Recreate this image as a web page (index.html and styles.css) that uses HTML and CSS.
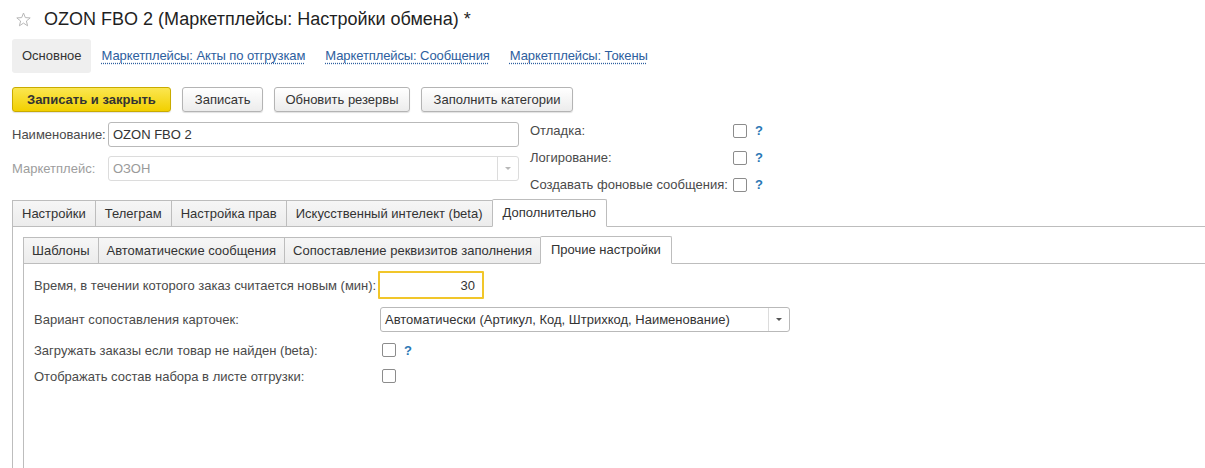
FILE: index.html
```html
<!DOCTYPE html>
<html lang="ru">
<head>
<meta charset="utf-8">
<link rel="stylesheet" href="styles.css">
</head>
<body>
<div class="header">
  <svg class="star" width="15" height="15" viewBox="0 0 15 15"><path d="M7.5 1 L9.3 5.6 L14.2 5.9 L10.4 9 L11.6 13.8 L7.5 11.1 L3.4 13.8 L4.6 9 L0.8 5.9 L5.7 5.6 Z" fill="none" stroke="#b8b8b8" stroke-width="1"/></svg>
  <h1 class="title">OZON FBO 2 (Маркетплейсы: Настройки обмена) *</h1>
</div>
<div class="nav">
  <span class="nav-item active">Основное</span>
  <a class="nav-item link">Маркетплейсы: Акты по отгрузкам</a>
  <a class="nav-item link">Маркетплейсы: Сообщения</a>
  <a class="nav-item link">Маркетплейсы: Токены</a>
</div>
<div class="toolbar">
  <button class="btn primary">Записать и закрыть</button>
  <button class="btn">Записать</button>
  <button class="btn">Обновить резервы</button>
  <button class="btn">Заполнить категории</button>
</div>
<div class="form-top">
  <div class="col-left">
    <div class="frow">
      <span class="flabel">Наименование:</span>
      <div class="input">OZON FBO 2</div>
    </div>
    <div class="frow">
      <span class="flabel disabled">Маркетплейс:</span>
      <div class="input select disabled"><span class="sel-text">ОЗОН</span><span class="sel-btn"><span class="tri light"></span></span></div>
    </div>
  </div>
  <div class="col-right">
    <div class="crow"><span class="clabel">Отладка:</span><span class="cb"></span><span class="q">?</span></div>
    <div class="crow"><span class="clabel">Логирование:</span><span class="cb"></span><span class="q">?</span></div>
    <div class="crow"><span class="clabel">Создавать фоновые сообщения:</span><span class="cb"></span><span class="q">?</span></div>
  </div>
</div>
<div class="tabs outer">
  <div class="tabbar">
    <span class="tab">Настройки</span>
    <span class="tab">Телеграм</span>
    <span class="tab">Настройка прав</span>
    <span class="tab">Искусственный интелект (beta)</span>
    <span class="tab active">Дополнительно</span>
    <span class="tab-fill"></span>
  </div>
  <div class="panel outer-panel">
    <div class="tabs inner">
      <div class="tabbar">
        <span class="tab">Шаблоны</span>
        <span class="tab">Автоматические сообщения</span>
        <span class="tab">Сопоставление реквизитов заполнения</span>
        <span class="tab active">Прочие настройки</span>
        <span class="tab-fill"></span>
      </div>
      <div class="panel inner-panel">
        <div class="grid">
          <span class="glabel">Время, в течении которого заказ считается новым (мин):</span>
          <div class="input num focused">30</div>
          <span class="glabel">Вариант сопоставления карточек:</span>
          <div class="input select wide"><span class="sel-text">Автоматически (Артикул, Код, Штрихкод, Наименование)</span><span class="sel-btn"><span class="tri"></span></span></div>
          <span class="glabel">Загружать заказы если товар не найден (beta):</span>
          <div class="cbwrap"><span class="cb"></span><span class="q">?</span></div>
          <span class="glabel">Отображать состав набора в листе отгрузки:</span>
          <div class="cbwrap"><span class="cb"></span></div>
        </div>
      </div>
    </div>
  </div>
</div>
</body>
</html>
```

FILE: styles.css
```css
* { box-sizing: border-box; }
html, body { margin: 0; padding: 0; background: #fff; overflow: hidden; }
body {
  font-family: "Liberation Sans", Arial, sans-serif;
  font-size: 13px;
  color: #4a4a4a;
  width: 1205px;
  height: 468px;
}
.header {
  display: flex;
  align-items: center;
  height: 36px;
  padding: 2px 0 0 16px;
}
.star { margin-right: 13px; }
.title {
  margin: 0;
  font-size: 18px;
  font-weight: normal;
  color: #1f1f1f;
}
.nav {
  display: flex;
  align-items: center;
  gap: 2px;
  margin: 3px 0 0 12px;
  height: 34px;
}
.nav-item {
  height: 34px;
  line-height: 34px;
  padding: 0 10px;
  border-radius: 3px;
}
.nav-item.active { background: #efefef; color: #333; padding: 0 9px 0 10px; }
.nav-item.link {
  color: #2d5e9e;
  padding: 0 9px;
  letter-spacing: -0.1px;
  text-decoration: underline dotted;
  text-underline-offset: 3px;
}
.toolbar {
  display: flex;
  gap: 11px;
  margin: 14px 0 0 12px;
}
.btn {
  font-family: inherit;
  font-size: 13px;
  height: 25px;
  padding: 0 12px;
  color: #333;
  border: 1px solid #b4b4b4;
  border-radius: 3px;
  background: linear-gradient(#ffffff, #ececec);
  box-shadow: 0 1px 1px rgba(0,0,0,0.12);
}
.btn:nth-child(3) { padding: 0 10px; }
.btn.primary {
  background: linear-gradient(#fbe650, #f2d000);
  border-color: #c9ab00;
  font-weight: bold;
  color: #333;
  padding: 0 14px;
}
.form-top {
  display: flex;
  margin: 10px 0 0 12px;
}
.col-left {
  display: flex;
  flex-direction: column;
  gap: 9px;
  width: 507px;
}
.frow {
  display: flex;
  align-items: center;
}
.flabel { width: 96px; color: #4a4a4a; }
.flabel.disabled { color: #9d9d9d; }
.input {
  height: 25px;
  border: 1px solid #b9b9b9;
  border-radius: 3px;
  padding: 0 4px;
  display: flex;
  align-items: center;
  color: #333;
  background: #fff;
}
.frow .input { width: 411px; }
.input.disabled { border-color: #dcdcdc; color: #9a9a9a; }
.select { padding: 0; }
.sel-text { flex: 1; padding-left: 4px; }
.sel-btn {
  width: 21px;
  height: 100%;
  border-left: 1px solid #dcdcdc;
  display: flex;
  align-items: center;
  justify-content: center;
}
.tri {
  width: 0; height: 0;
  border-left: 3px solid transparent;
  border-right: 3px solid transparent;
  border-top: 3px solid #555;
}
.tri.light { border-top-color: #b8b8b8; }
.col-right {
  display: flex;
  flex-direction: column;
  margin-left: 11px;
  margin-top: -5px;
}
.crow {
  display: flex;
  align-items: center;
  height: 27px;
}
.clabel { width: 203px; color: #4a4a4a; }
.cb {
  display: inline-block;
  width: 14px;
  height: 14px;
  border: 1px solid #8c8c8c;
  border-radius: 2px;
  background: #fff;
}
.q {
  color: #2b77b5;
  font-weight: bold;
  margin-left: 8px;
  font-size: 13px;
}
.tabs.outer { margin: 2px 0 0 12px; }
.tabbar {
  display: flex;
  align-items: flex-end;
  height: 27px;
}
.tab {
  height: 27px;
  line-height: 26px;
  padding: 0 9px;
  border: 1px solid #bdbdbd;
  border-right: none;
  background: linear-gradient(#f6f6f6, #ececec);
  color: #333;
  white-space: nowrap;
}
.inner .tab { padding: 0 8px; }
.tab.active {
  height: 28px;
  background: #fff;
  border-bottom-color: #fff;
  border-right: 1px solid #bdbdbd;
  padding: 0 10px;
  border-radius: 2px 2px 0 0;
}
.tab-fill {
  flex: 1;
  border-bottom: 1px solid #bdbdbd;
}
.panel { border-left: 1px solid #bdbdbd; }
.outer-panel { padding: 10px 0 0 10px; height: 241px; }
.inner-panel { padding: 7px 0 0 10px; height: 204px; }
.grid {
  display: grid;
  grid-template-columns: 344px auto;
  grid-template-rows: 28px 40px 22px 30px;
  align-items: center;
  justify-items: start;
}
.glabel { color: #4a4a4a; }
.input.num {
  width: 106px;
  height: 28px;
  justify-content: flex-end;
  padding-right: 7px;
  border: 2px solid #f1c62a;
  border-radius: 1px;
}
.input.wide { width: 410px; margin-left: 2px; height: 25px; }
.cbwrap { display: flex; align-items: center; margin-left: 4px; }
```
